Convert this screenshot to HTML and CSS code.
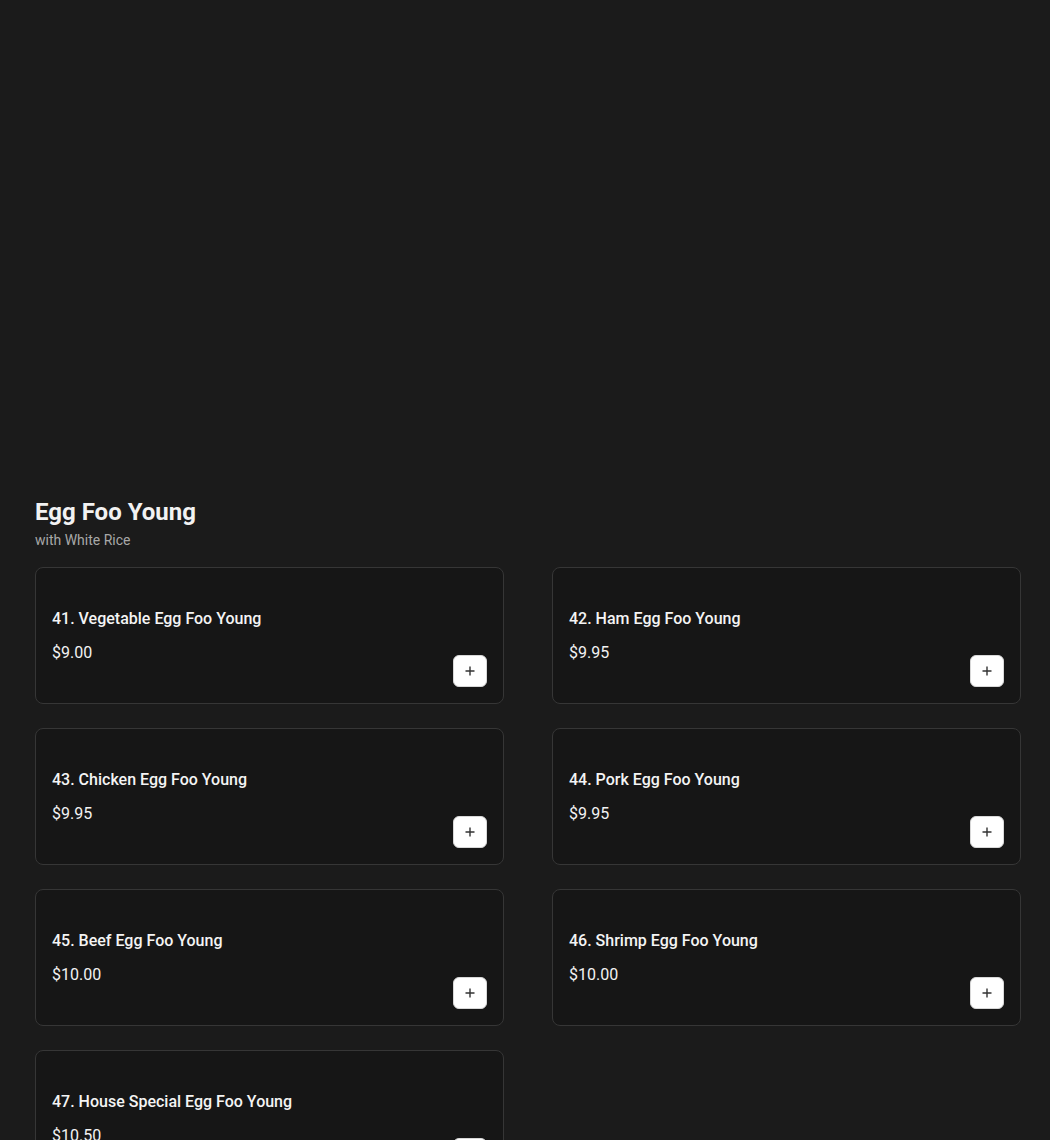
FILE: index.html
```html
<!DOCTYPE html>
<html>
<head>
<meta charset="utf-8">
<link rel="stylesheet" href="styles.css">
</head>
<body>
<div class="page">
  <div class="spacer"></div>
  <section class="category">
    <h2 class="cat-title">Egg Foo Young</h2>
    <p class="cat-sub">with White Rice</p>
    <div class="grid">
      <div class="card"><div class="info"><div class="name">41. Vegetable Egg Foo Young</div><div class="price">$9.00</div></div><button class="add"><svg width="12" height="12" viewBox="0 0 12 12"><path d="M6 1.5v9M1.5 6h9" stroke="#333" stroke-width="1.4"/></svg></button></div>
      <div class="card"><div class="info"><div class="name">42. Ham Egg Foo Young</div><div class="price">$9.95</div></div><button class="add"><svg width="12" height="12" viewBox="0 0 12 12"><path d="M6 1.5v9M1.5 6h9" stroke="#333" stroke-width="1.4"/></svg></button></div>
      <div class="card"><div class="info"><div class="name">43. Chicken Egg Foo Young</div><div class="price">$9.95</div></div><button class="add"><svg width="12" height="12" viewBox="0 0 12 12"><path d="M6 1.5v9M1.5 6h9" stroke="#333" stroke-width="1.4"/></svg></button></div>
      <div class="card"><div class="info"><div class="name">44. Pork Egg Foo Young</div><div class="price">$9.95</div></div><button class="add"><svg width="12" height="12" viewBox="0 0 12 12"><path d="M6 1.5v9M1.5 6h9" stroke="#333" stroke-width="1.4"/></svg></button></div>
      <div class="card"><div class="info"><div class="name">45. Beef Egg Foo Young</div><div class="price">$10.00</div></div><button class="add"><svg width="12" height="12" viewBox="0 0 12 12"><path d="M6 1.5v9M1.5 6h9" stroke="#333" stroke-width="1.4"/></svg></button></div>
      <div class="card"><div class="info"><div class="name">46. Shrimp Egg Foo Young</div><div class="price">$10.00</div></div><button class="add"><svg width="12" height="12" viewBox="0 0 12 12"><path d="M6 1.5v9M1.5 6h9" stroke="#333" stroke-width="1.4"/></svg></button></div>
      <div class="card"><div class="info"><div class="name">47. House Special Egg Foo Young</div><div class="price">$10.50</div></div><button class="add"><svg width="12" height="12" viewBox="0 0 12 12"><path d="M6 1.5v9M1.5 6h9" stroke="#333" stroke-width="1.4"/></svg></button></div>
    </div>
  </section>
</div>
</body>
</html>
```

FILE: styles.css
```css
html, body {
  margin: 0;
  padding: 0;
  background: #1b1b1b;
  font-family: Roboto, "Liberation Sans", Arial, sans-serif;
  color: #f2f2f2;
}
.page {
  padding: 0 29px 0 35px;
}
.spacer {
  height: 498px;
}
.cat-title {
  margin: 0;
  font-size: 24px;
  line-height: 28px;
  font-weight: 700;
  color: #f2f2f2;
}
.cat-sub {
  margin: 4px 0 0;
  font-size: 14px;
  line-height: 20px;
  color: #a8a8a8;
}
.grid {
  margin-top: 17px;
  display: grid;
  grid-template-columns: 1fr 1fr;
  column-gap: 48px;
  row-gap: 24px;
}
.card {
  display: flex;
  justify-content: space-between;
  background: #161616;
  border: 1px solid #363636;
  border-radius: 8px;
  padding: 16px;
}
.info {
  padding: 23px 0 22px;
}
.name {
  font-size: 16px;
  line-height: 24px;
  font-weight: 500;
  color: #f4f4f4;
}
.price {
  margin-top: 10px;
  font-size: 16px;
  line-height: 24px;
  color: #f2f2f2;
}
.add {
  align-self: flex-end;
  width: 34px;
  height: 32px;
  padding: 0;
  border: 1px solid #d8d8d8;
  border-radius: 6px;
  background: #ffffff;
  display: flex;
  align-items: center;
  justify-content: center;
  cursor: pointer;
}
```
